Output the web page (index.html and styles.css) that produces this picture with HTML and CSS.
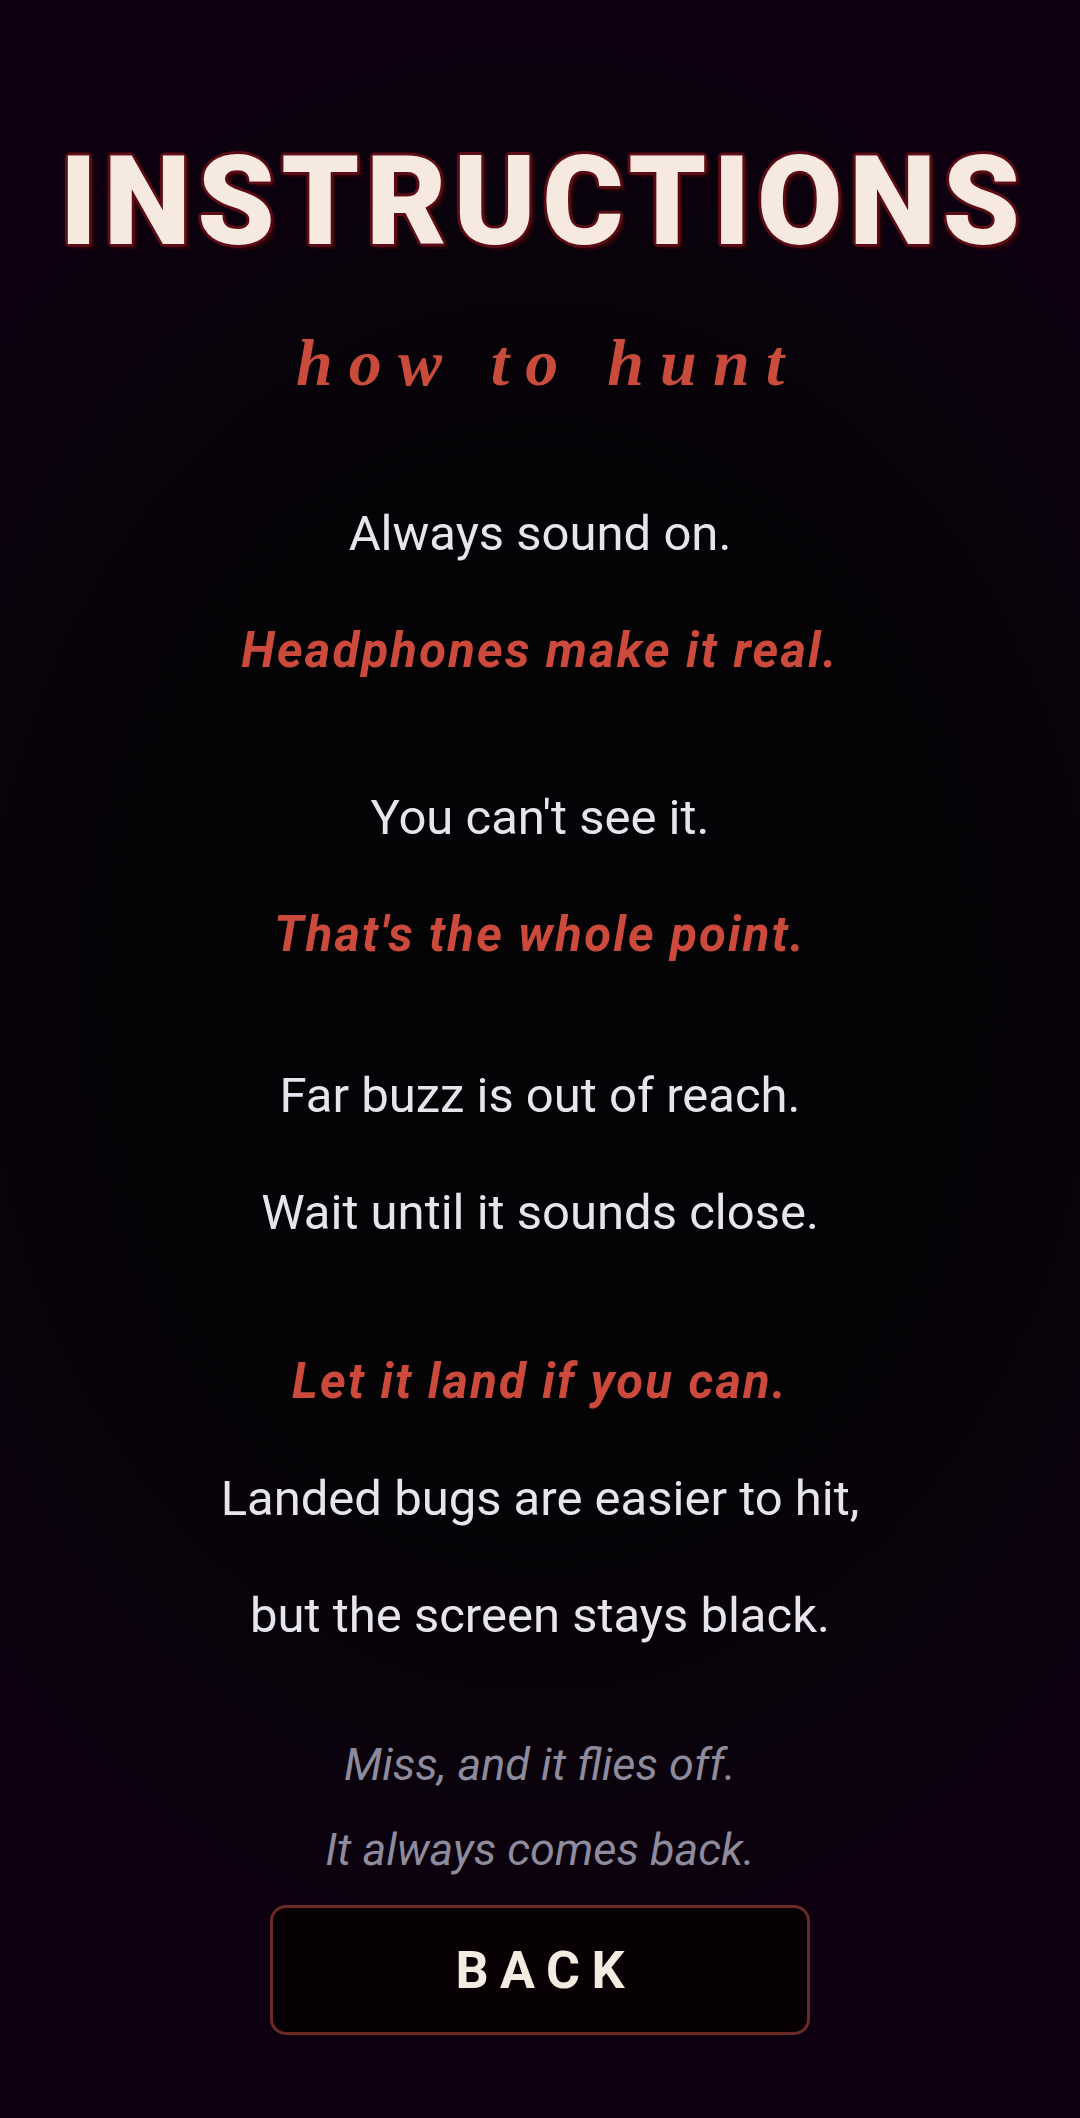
FILE: index.html
```html
<!DOCTYPE html>
<html lang="en">
<head>
<meta charset="utf-8">
<title>Instructions</title>
<link rel="stylesheet" href="styles.css">
</head>
<body>
<main class="screen">
  <h1 class="title">INSTRUCTIONS</h1>
  <h2 class="subtitle">how to hunt</h2>

  <section class="group g1">
    <p class="line">Always sound on.</p>
    <p class="line accent">Headphones make it real.</p>
  </section>

  <section class="group g2">
    <p class="line">You can't see it.</p>
    <p class="line accent">That's the whole point.</p>
  </section>

  <section class="group g3">
    <p class="line">Far buzz is out of reach.</p>
    <p class="line">Wait until it sounds close.</p>
  </section>

  <section class="group g4">
    <p class="line accent">Let it land if you can.</p>
    <p class="line">Landed bugs are easier to hit,</p>
    <p class="line">but the screen stays black.</p>
  </section>

  <section class="group note">
    <p class="muted">Miss, and it flies off.</p>
    <p class="muted">It always comes back.</p>
  </section>

  <button class="back" type="button">BACK</button>
</main>
</body>
</html>
```

FILE: styles.css
```css
html, body {
  margin: 0;
  padding: 0;
}

body {
  width: 1080px;
  height: 2118px;
  overflow: hidden;
  background-color: #0d0010;
  background-image: radial-gradient(ellipse 72% 46% at 50% 47%, #040305 0%, #050306 55%, #0a020c 82%, #0e0011 100%);
  border-top: 1px solid #050005;
  box-sizing: border-box;
  font-family: Roboto, "Noto Sans", sans-serif;
}

.screen {
  display: flex;
  flex-direction: column;
  align-items: center;
  padding-top: 139px;
  text-align: center;
}

.title {
  margin: 0;
  font-family: Roboto, sans-serif;
  font-weight: 900;
  font-size: 124px;
  line-height: 124px;
  letter-spacing: 0.052em;
  margin-right: -0.052em;
  color: #f6eae0;
  text-shadow:
    3px 0 0 #5c0c14, -3px 0 0 #5c0c14, 0 3px 0 #5c0c14, 0 -3px 0 #5c0c14,
    2px 2px 0 #5c0c14, -2px -2px 0 #5c0c14, 2px -2px 0 #5c0c14, -2px 2px 0 #5c0c14,
    5px 5px 2px #2a0408;
}

.subtitle {
  margin: 59px 0 0;
  font-family: "Liberation Serif", "Times New Roman", serif;
  font-style: italic;
  font-weight: 700;
  font-size: 66px;
  line-height: 80px;
  letter-spacing: 0.245em;
  margin-right: -0.245em;
  color: #c94b3c;
}

.group {
  display: flex;
  flex-direction: column;
  align-items: center;
}

.g1 { margin-top: 72px; }
.g2 { margin-top: 50px; }
.g3 { margin-top: 44px; }
.g4 { margin-top: 52px; }
.note { margin-top: 48px; }

.line {
  margin: 0;
  font-size: 49px;
  line-height: 117px;
  color: #e6e4ec;
  font-weight: 400;
}

.line.accent {
  color: #cc4a3b;
  font-style: italic;
  font-weight: 700;
  font-size: 49px;
  letter-spacing: 0.045em;
}

.muted {
  margin: 0;
  font-size: 45px;
  line-height: 85px;
  font-style: italic;
  color: #8e8b9d;
}

.back {
  margin-top: 13px;
  width: 540px;
  height: 130px;
  box-sizing: border-box;
  border: 3px solid #6b2a25;
  border-radius: 16px;
  background: #070004;
  color: #f4ebe0;
  font-family: Roboto, sans-serif;
  font-weight: 700;
  font-size: 52px;
  letter-spacing: 0.22em;
  padding: 0 0 0 0.22em;
  cursor: pointer;
}
```
